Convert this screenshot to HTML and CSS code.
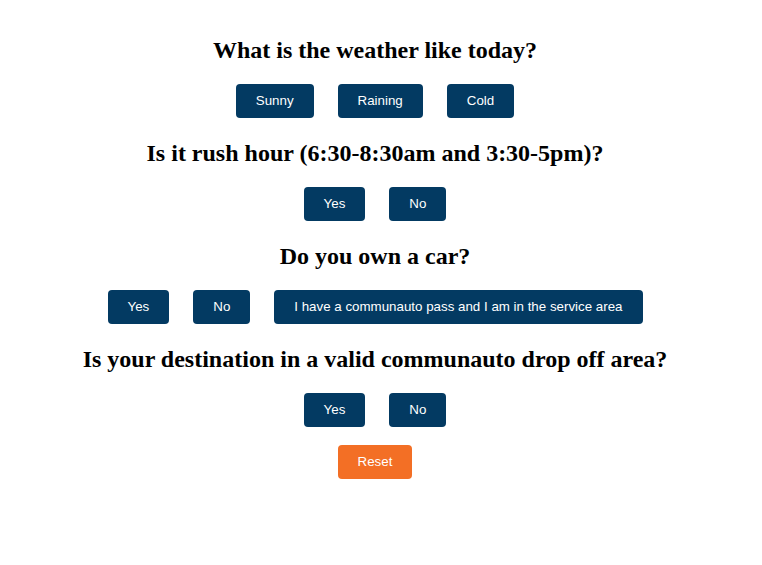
FILE: index.html
```html
<!DOCTYPE html>
<html lang="en">
<head>
<meta charset="utf-8">
<title>Commute questions</title>
<link rel="stylesheet" href="styles.css">
</head>
<body>
<main class="page">
  <section class="question">
    <h2 class="question-title">What is the weather like today?</h2>
    <div class="options">
      <button class="btn">Sunny</button>
      <button class="btn">Raining</button>
      <button class="btn">Cold</button>
    </div>
  </section>
  <section class="question">
    <h2 class="question-title">Is it rush hour (6:30-8:30am and 3:30-5pm)?</h2>
    <div class="options">
      <button class="btn">Yes</button>
      <button class="btn">No</button>
    </div>
  </section>
  <section class="question">
    <h2 class="question-title">Do you own a car?</h2>
    <div class="options">
      <button class="btn">Yes</button>
      <button class="btn">No</button>
      <button class="btn">I have a communauto pass and I am in the service area</button>
    </div>
  </section>
  <section class="question">
    <h2 class="question-title">Is your destination in a valid communauto drop off area?</h2>
    <div class="options">
      <button class="btn">Yes</button>
      <button class="btn">No</button>
    </div>
  </section>
  <div class="options reset-row">
    <button class="btn btn-reset">Reset</button>
  </div>
</main>
</body>
</html>
```
FILE: styles.css
```css
html, body {
  margin: 0;
  padding: 0;
  background: #ffffff;
}

.page {
  width: 750px;
  padding-top: 36px;
  display: flex;
  flex-direction: column;
  gap: 21px;
  text-align: center;
}

.question {
  display: flex;
  flex-direction: column;
  gap: 20px;
}

.question-title {
  margin: 0;
  font-family: "Liberation Serif", "Times New Roman", serif;
  font-size: 24px;
  font-weight: bold;
  line-height: 28px;
  color: #000000;
}

.options {
  display: flex;
  justify-content: center;
  gap: 24px;
}

.reset-row {
  margin-top: -3px;
}

.btn {
  margin: 0;
  border: none;
  border-radius: 4px;
  padding: 10px 20px;
  height: 34px;
  font-family: "Liberation Sans", Arial, sans-serif;
  font-size: 13.33px;
  line-height: 14px;
  color: #ffffff;
  background: #033a62;
  cursor: pointer;
}

.btn-reset {
  background: #f36f25;
}
```
